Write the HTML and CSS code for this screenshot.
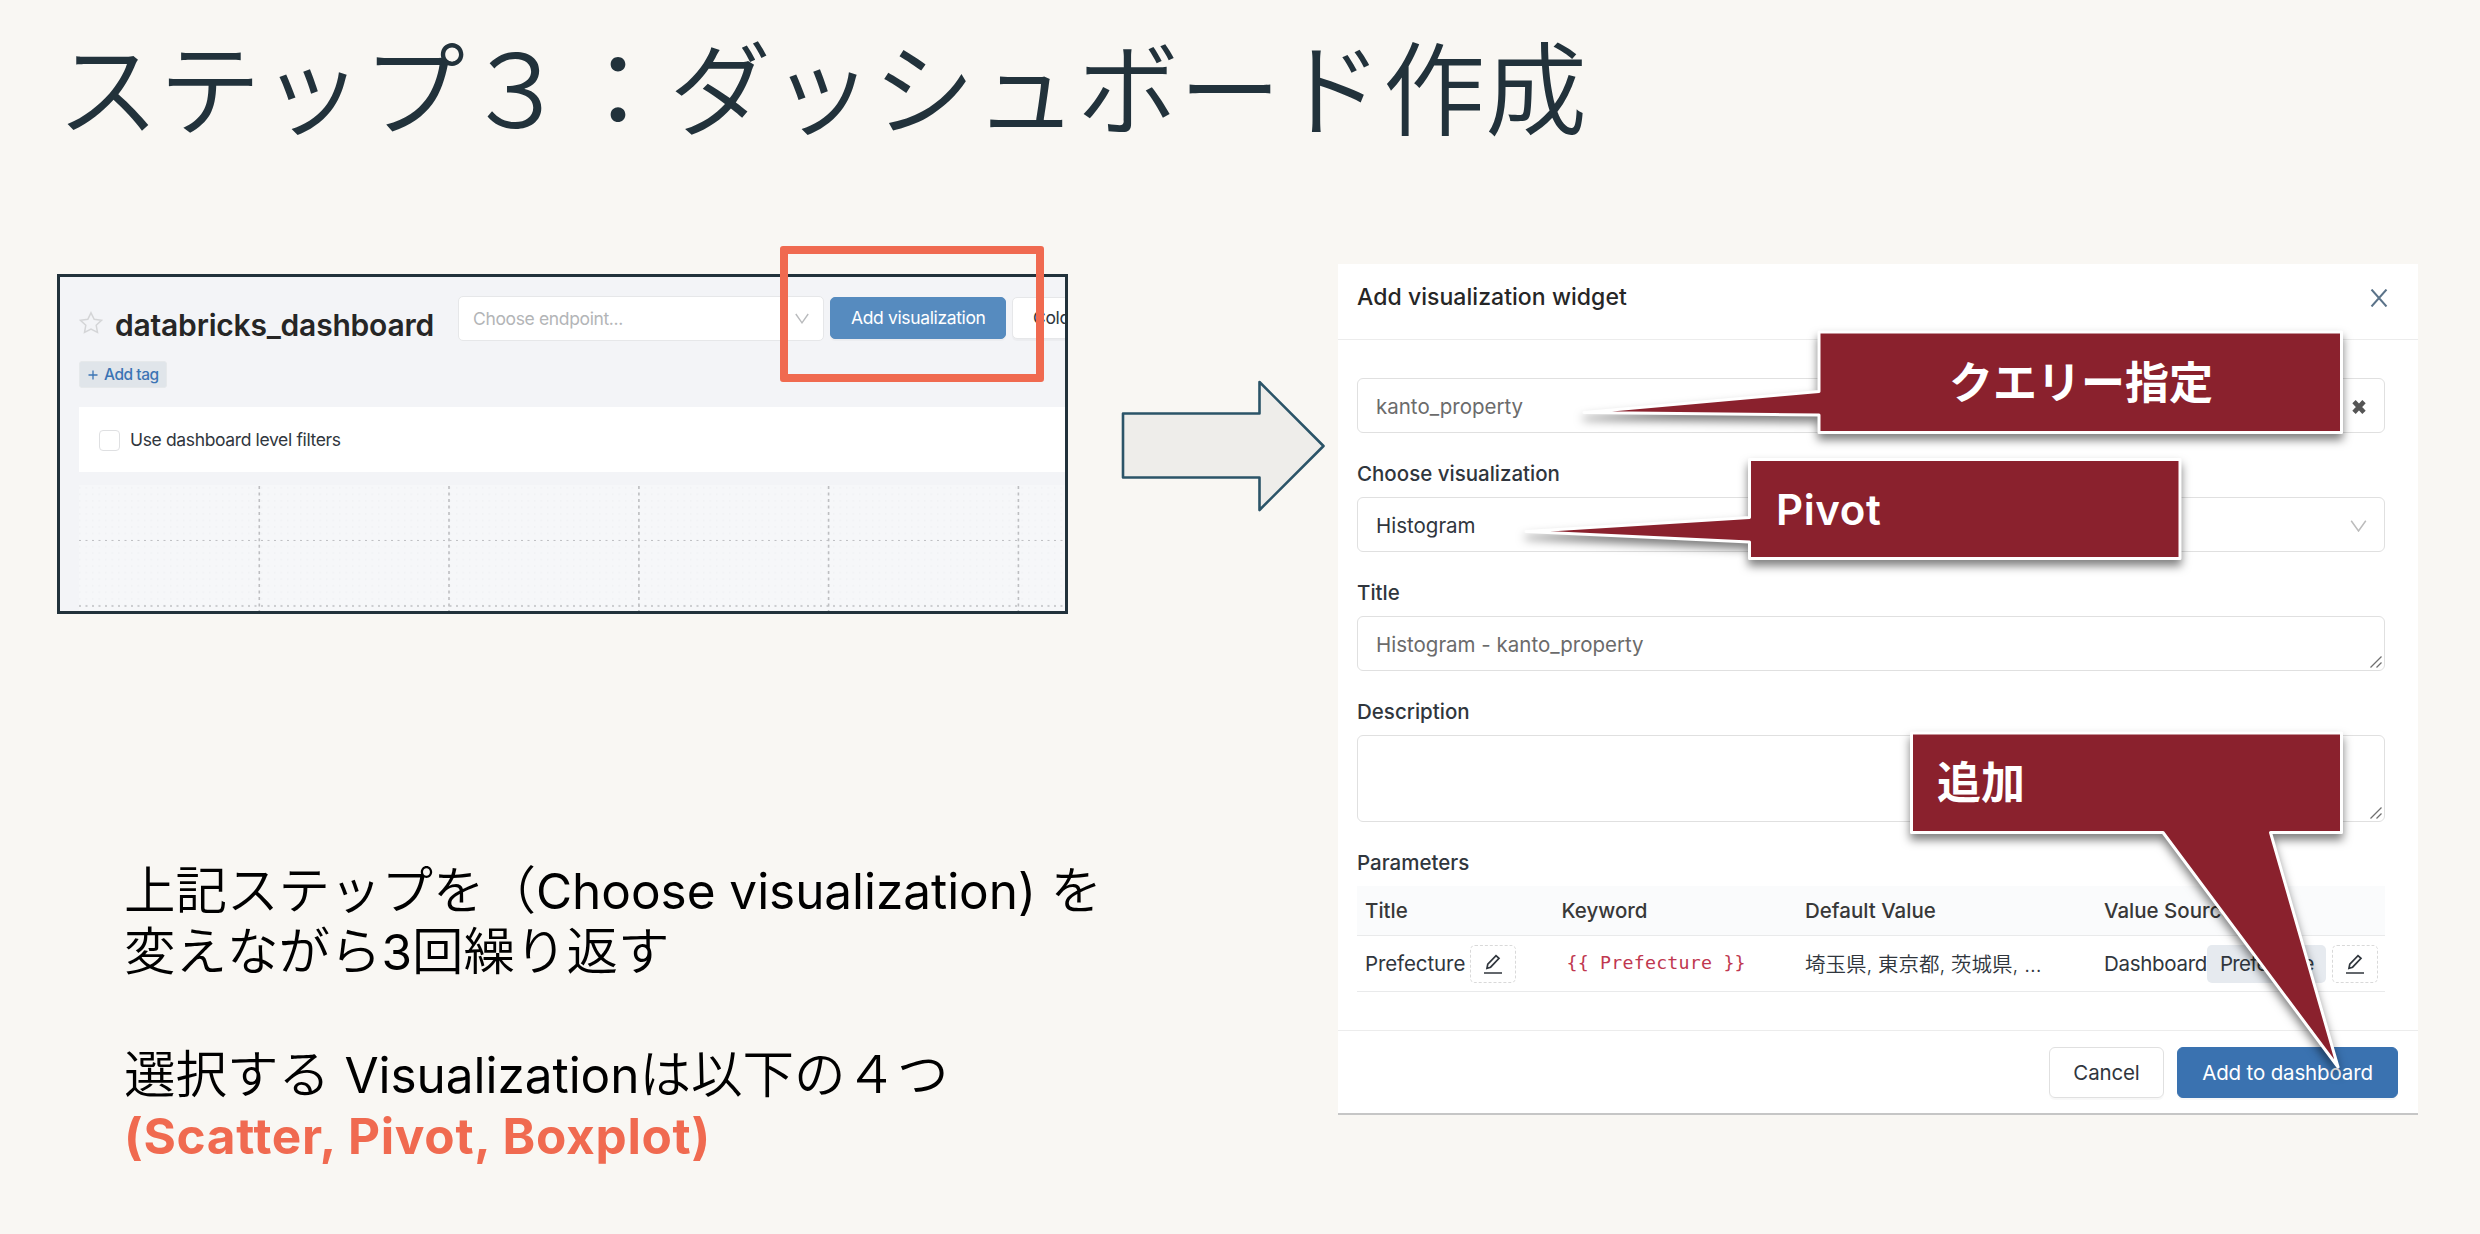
FILE: index.html
```html
<!DOCTYPE html>
<html lang="ja">
<head>
<meta charset="utf-8">
<title>ステップ３：ダッシュボード作成</title>
<link rel="stylesheet" href="styles.css">
</head>
<body>
<main class="slide">
  <h1 class="slide-title">ステップ３：ダッシュボード作成</h1>
  <div class="columns">
    <section class="left">
      <div class="shot-wrap">
        <div class="shot">
          <div class="toolbar">
            <svg class="star" width="24" height="24" viewBox="0 0 24 24"><path d="M12 1.800L15.200 8.300 22.500 9.300 17.200 14.300 18.500 21.500 12 18.100 5.500 21.500 6.800 14.300 1.500 9.300 8.800 8.300z"/></svg>
            <span class="dash-name">databricks_dashboard</span>
            <div class="endpoint"><span>Choose endpoint...</span><svg width="14" height="11" viewBox="0 0 14 11"><path d="M.8 1L7 9.800 13.200 1"/></svg></div>
            <span class="tool-btn primary">Add visualization</span>
            <span class="tool-btn">Colors</span>
          </div>
          <div class="tag-row"><span class="add-tag"><svg width="10" height="10" viewBox="0 0 10 10"><path d="M5 .5v9M.5 5h9"/></svg>Add tag</span></div>
          <div class="filters"><span class="checkbox"></span><span>Use dashboard level filters</span></div>
          <svg class="canvas" width="986" height="126" viewBox="0 0 986 126">
            <defs><pattern id="dots" width="6.5" height="6.53" patternUnits="userSpaceOnUse"><rect x="0" y="2" width="1.500" height="1.500" fill="#f0f1f4"/></pattern></defs>
            <rect width="986" height="126" fill="#f6f7f9"/>
            <rect width="986" height="126" fill="url(#dots)"/>
            <g class="grid-v"><path d="M180.300 1v125M370 1v125M559.900 1v125M749.600 1v125M939.400 1v125"/></g>
            <path class="grid-h1" d="M0 55.500h986"/>
            <path class="grid-h2" d="M0 121h986"/>
          </svg>
        </div>
        <div class="highlight"></div>
      </div>
      <div class="notes">
        <p>上記ステップを（<span class="lat">Choose visualization)</span> を</p>
        <p>変えながら<span class="lat">3</span>回繰り返す</p>
        <p>&nbsp;</p>
        <p>選択する <span class="lat">Visualization</span>は以下の４つ</p>
        <p class="choices">(Scatter, Pivot, Boxplot)</p>
      </div>
    </section>
    <svg class="arrow" width="206" height="136" viewBox="0 0 206 136"><path d="M3 35.500H139.500V4L203.500 68 139.500 132V99.500H3z"/></svg>
    <section class="modal">
      <header class="modal-head"><span>Add visualization widget</span><svg width="18" height="18" viewBox="0 0 18 18"><path d="M1.500 .5L16.500 17.500M16.500 .5L1.500 17.500"/></svg></header>
      <div class="modal-body">
        <div class="field muted"><span>kanto_property</span><svg class="clear" width="14" height="16" viewBox="0 0 14 16"><path d="M2 2.600L12 13.400M12 2.600L2 13.400"/></svg></div>
        <div class="label">Choose visualization</div>
        <div class="field"><span>Histogram</span><svg class="chev" width="17" height="12" viewBox="0 0 17 12"><path d="M1.200 .8L8.500 11 15.800 .8"/></svg></div>
        <div class="label">Title</div>
        <div class="field muted area"><span>Histogram - kanto_property</span><svg class="grip" width="12" height="12" viewBox="0 0 12 12"><path d="M.5 11.500L11.500 .5M6.500 11.500L11.500 6.500"/></svg></div>
        <div class="label">Description</div>
        <div class="field area tall"><svg class="grip" width="12" height="12" viewBox="0 0 12 12"><path d="M.5 11.500L11.500 .5M6.500 11.500L11.500 6.500"/></svg></div>
        <div class="label">Parameters</div>
        <div class="row head"><span>Title</span><span>Keyword</span><span>Default Value</span><span>Value Source</span></div>
        <div class="row">
          <div class="cell"><span class="pref">Prefecture</span><span class="edit"><svg width="20" height="20" viewBox="0 0 20 20"><path d="M1 19h18M4 14.200l.8-4L13 1.600l3 2.800-8.400 8.800z"/></svg></span></div>
          <div class="cell code">{{ Prefecture }}</div>
          <div class="cell values">埼玉県, 東京都, 茨城県, ...</div>
          <div class="cell"><span class="dash">Dashboard</span><span class="chip">Prefecture</span><span class="edit"><svg width="20" height="20" viewBox="0 0 20 20"><path d="M1 19h18M4 14.200l.8-4L13 1.600l3 2.800-8.400 8.800z"/></svg></span></div>
        </div>
      </div>
      <footer class="modal-foot"><span class="btn cancel">Cancel</span><span class="btn add">Add to dashboard</span></footer>
      <svg class="callouts" width="1080" height="851" viewBox="1338 264 1080 851">
        <path d="M1819 332H2341.500V432.500H1819V415L1584 412.500 1819 391.500z"/>
        <path d="M1749.500 459.500H2180V558.500H1749.500V542L1526 531.500 1749.500 517.500z"/>
        <path d="M1911.500 733H2341.500V832.500H2270.500L2338 1067 2163 832.500H1911.500z"/>
      </svg>
      <div class="callout-text query">クエリー指定</div>
      <div class="callout-text pivot">Pivot</div>
      <div class="callout-text append">追加</div>
    </section>
  </div>
</main>
</body>
</html>
```
FILE: styles.css
```css
* { box-sizing: border-box; }
body {
  margin: 0;
  background: #f9f7f3;
  font-family: Inter, "Noto Sans CJK JP", sans-serif;
  color: #30363d;
}
svg { display: block; flex: none; fill: none; }
.slide { width: 2480px; height: 1234px; overflow: hidden; padding: 24px 0 0 57px; }
.slide-title {
  margin: 0 0 120px;
  height: 120px;
  font: 350 102px/120px "Noto Sans CJK JP", sans-serif;
  color: #22323b;
  white-space: nowrap;
}
.columns { display: flex; align-items: flex-start; }
.left { width: 1011px; padding-top: 10px; }

/* dashboard screenshot */
.shot-wrap { position: relative; }
.shot {
  height: 340px;
  border: 3px solid #22323b;
  background: #f3f4f7;
  padding: 18px 0 0 19px;
  overflow: hidden;
  font-size: 17.5px;
  letter-spacing: -.36px;
}
.toolbar { display: flex; height: 46px; white-space: nowrap; align-items: center; }
.toolbar > * { flex: none; }
.star { stroke: #d4d5d7; stroke-width: 1.500; margin-top: 10px; }
.dash-name { width: 343px; margin: 14px 0 0 12px; font-size: 30px; font-weight: 600; letter-spacing: -.2px; line-height: 36px; color: #262626; }
.endpoint {
  width: 366px; height: 45px; padding: 0 14px;
  display: flex; justify-content: space-between; align-items: center;
  background: #fff; border: 1px solid #e6e7e9; border-radius: 5px; color: #b3b5b7;
}
.endpoint svg { stroke: #b9bbbd; stroke-width: 1.400; }
.tool-btn {
  height: 42px; line-height: 40px; margin-left: 6px; padding: 0 20px;
  border: 1px solid #e6e7e9; border-radius: 5px; background: #fff; color: #30363d;
  box-shadow: 0 2px 1px rgba(0,0,0,.03);
}
.tool-btn.primary { width: 176px; background: #568bbf; border-color: #568bbf; color: #fff; }
.tag-row { display: flex; padding-top: 20px; height: 66px; }
.add-tag {
  width: 88px; height: 27px; padding-left: 8px; display: flex; align-items: center; gap: 6px;
  background: #e0e5ea; border: 1px solid #e6e9eb; border-radius: 3px;
  color: #3b74b4; font-size: 15.500px; font-weight: 500; letter-spacing: -.45px; white-space: nowrap;
}
.add-tag svg { stroke: #3b74b4; stroke-width: 1.300; }
.filters { height: 65px; padding-left: 20px; display: flex; align-items: center; gap: 10px; background: #fff; }
.checkbox { width: 21px; height: 21px; margin-top: 2px; border: 1px solid #dfe0e2; border-radius: 4px; }
.canvas { margin-top: 13px; }
.grid-v { stroke: #bdbec1; stroke-width: 1.600; stroke-dasharray: 3 3.530; }
.grid-h1 { stroke: #c0c1c4; stroke-width: 1; stroke-dasharray: 2 4.500; }
.grid-h2 { stroke: #c0c1c4; stroke-width: 1.600; stroke-dasharray: 2 4.500; }
.highlight { position: absolute; left: 723px; top: -28px; width: 264px; height: 136px; border: 8px solid #f06a50; border-radius: 3px; }

/* notes under the screenshot */
.notes { padding: 246px 0 0 67px; color: #000; }
.notes p { margin: 0; height: 61.400px; line-height: 61.400px; white-space: nowrap; font-family: Inter, "Noto Sans CJK JP", sans-serif; font-size: 51.500px; font-weight: 350; }
.notes .lat { font-size: 49.500px; font-weight: 400; letter-spacing: -.05px; }
.notes .choices { font-size: 49.500px; font-weight: 700; letter-spacing: .72px; color: #f06a50; }

.arrow { margin: 114px 12px 0 52px; }
.arrow path { fill: #eeedea; stroke: #2b5468; stroke-width: 2.600; stroke-linejoin: round; }

/* modal dialog */
.modal { position: relative; width: 1080px; height: 851px; background: #fff; border-bottom: 2px solid #c6c6c6; font-size: 20.500px; }
.modal-head {
  height: 76px; padding: 0 30px 10px 19px; display: flex; align-items: center; justify-content: space-between;
  border-bottom: 1px solid #ececec; font-size: 23px; font-weight: 500; letter-spacing: .05px; color: #262626;
}
.modal-head svg { stroke: #5b7389; stroke-width: 2; margin-top: 3px; }
.modal-body { height: 690px; padding: 38px 33px 0 19px; }
.field {
  position: relative; height: 55px; padding: 2px 18px 0 18px; display: flex; align-items: center; justify-content: space-between;
  border: 1px solid #e0e0e0; border-radius: 6px;
}
.muted { color: #6b6b6b; }
.tall { height: 87px; }
.grip { position: absolute; right: 2px; bottom: 2px; stroke: #6f6f6f; stroke-width: 1.300; }
.clear { stroke: #555; stroke-width: 4.600; overflow: visible; }
.chev { stroke: #bcbcbc; stroke-width: 1.500; margin-right: -1px; }
.label { height: 64px; padding-top: 17px; line-height: 47px; font-weight: 500; }
.row { display: grid; grid-template-columns: 196.500px 243.500px 299px 1fr; padding-left: 8px; height: 56px; border-bottom: 1px solid #e9eaeb; align-items: center; white-space: nowrap; }
.row.head { height: 50px; background: #fafbfc; font-weight: 500; color: #383838; }
.cell { display: flex; align-items: center; }
.values { font-weight: 350; margin-top: -1px; }
.pref { width: 105px; letter-spacing: -.1px; }
.dash { width: 103px; letter-spacing: -.3px; }
.chip { width: 119px; height: 38px; line-height: 38px; padding-left: 13px; border-radius: 5px; background: #e6eaef; letter-spacing: -.75px; }
.edit { width: 46px; height: 38px; display: flex; align-items: center; justify-content: center; border: 1px dashed #d9d9d9; border-radius: 5px; }
.edit svg { stroke: #30363d; stroke-width: 1.700; }
.chip + .edit { margin-left: 6px; }
.code { padding-left: 5px; font-family: "DejaVu Sans Mono", monospace; font-size: 18.300px; letter-spacing: .2px; color: #c0374f; margin-top: -3px; }
.modal-foot { height: 83px; padding: 16px 20px 0 0; border-top: 1px solid #ececec; display: flex; justify-content: flex-end; gap: 13px; }
.btn { height: 51px; line-height: 50px; text-align: center; border: 1px solid #e0e0e0; border-radius: 6px; box-shadow: 0 2px 1px rgba(0,0,0,.03); letter-spacing: -.15px; }
.cancel { width: 115px; }
.add { width: 221px; background: #3a72b0; border-color: #3a72b0; color: #fff; }

/* callouts laid over the dialog */
.callouts { position: absolute; left: 0; top: 0; overflow: visible; filter: drop-shadow(0 6px 5px rgba(0,0,0,.5)); }
.callouts path { fill: #8a212d; stroke: #fff; stroke-width: 3; stroke-linejoin: round; }
.callout-text { position: absolute; color: #fff; font: 700 44px/60px "Noto Sans CJK JP", sans-serif; white-space: nowrap; }
.query { left: 611px; top: 86px; }
.pivot { left: 438px; top: 216px; font-family: Inter, sans-serif; font-weight: 600; font-size: 42px; letter-spacing: .6px; }
.append { left: 599px; top: 486px; }
```
